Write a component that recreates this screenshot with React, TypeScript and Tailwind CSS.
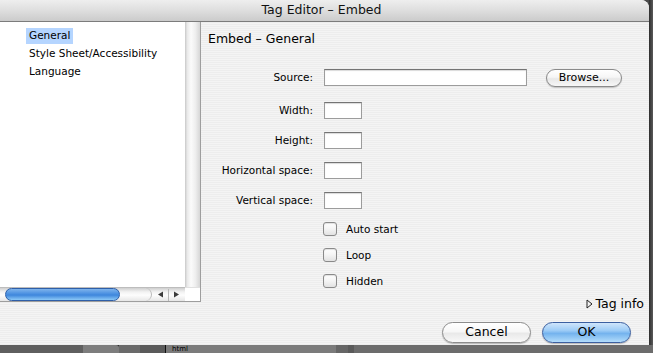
import React from "react";

const stripes =
  "bg-[repeating-linear-gradient(180deg,#ededed_0px,#ededed_1px,#f4f4f4_1px,#f4f4f4_2px)]";

function TextBox({ w }: { w: string }) {
  return (
    <div
      className={`${w} h-[17px] bg-white border border-[#9c9c9c] border-t-[#747474] shadow-[inset_0_1px_1px_rgba(0,0,0,0.15)]`}
    />
  );
}

function Row({ label, children }: { label: string; children: React.ReactNode }) {
  return (
    <div className="flex items-center h-[19px]">
      <div className="w-[112px] text-right text-[10.5px] leading-none text-black">{label}</div>
      <div className="ml-[11px] flex items-center">{children}</div>
    </div>
  );
}

function Check({ label }: { label: string }) {
  return (
    <div className="flex items-center h-[14px] ml-[122px]">
      <div className="w-[14px] h-[14px] rounded-[3px] border border-[#8a8a8a] bg-[linear-gradient(180deg,#ffffff_0%,#f4f4f4_50%,#e2e2e2_100%)] shadow-[inset_0_1px_1px_rgba(0,0,0,0.12)]" />
      <span className="ml-[9px] text-[10.5px] leading-none text-black">{label}</span>
    </div>
  );
}

export default function App() {
  return (
    <div className="w-[653px] h-[353px] overflow-hidden bg-[#4a4a4a] flex flex-col font-['DejaVu_Sans',sans-serif] text-black">
      <div className="flex h-[345px]">
        {/* window */}
        <div className={`w-[649px] h-full flex flex-col rounded-tr-[8px] overflow-hidden ${stripes}`}>
          {/* title bar */}
          <div className="h-[22px] shrink-0 flex items-center justify-center bg-[linear-gradient(180deg,#eeeeee_0%,#dedede_50%,#cbcbcb_100%)] border-b border-[#7c7c7c]">
            <span className="text-[12.5px] leading-none text-[#111] -ml-[6px]">Tag Editor – Embed</span>
          </div>
          <div className="flex flex-1 min-h-0">
            {/* left column */}
            <div className="w-[201px] shrink-0 flex flex-col">
              <div className="h-[280px] flex flex-col border-r border-b border-[#9e9e9e] bg-white">
                <div className="flex flex-1 min-h-0">
                  <div className="flex-1 bg-white pt-[5px] pl-[26px] text-[10.5px]">
                    <div className="h-[18px] flex items-center">
                      <span className="h-[16px] px-[3px] flex items-center bg-[#b5d5ff]">General</span>
                    </div>
                    <div className="h-[18px] flex items-center pl-[3px]">Style Sheet/Accessibility</div>
                    <div className="h-[18px] flex items-center pl-[3px]">Language</div>
                  </div>
                  <div className="w-[15px] bg-[linear-gradient(90deg,#c8c8c8_0%,#e9e9e9_15%,#fbfbfb_40%,#eeeeee_70%,#d6d6d6_100%)]" />
                </div>
                {/* horizontal scroller */}
                <div className="h-[14px] flex">
                  <div className="flex-1 flex items-center bg-[linear-gradient(180deg,#cfcfcf_0%,#f2f2f2_30%,#fdfdfd_55%,#e6e6e6_100%)] border-t border-[#bdbdbd]">
                    <div className="ml-[5px] w-[115px] h-[13px] rounded-full border border-[#2f5fa8] bg-[linear-gradient(180deg,#7fb4ec_0%,#4f93e2_40%,#3e86dc_55%,#8cc9f7_100%)]" />
                    <div className="w-[32px] h-[13px] rounded-r-full border-r border-[#b8b8b8]" />
                    <div className="flex items-center ml-[2px] h-full">
                      <svg width="14" height="13" viewBox="0 0 14 13">
                        <polygon points="4,6.5 9,3.5 9,9.5" fill="#3c3c3c" />
                      </svg>
                      <div className="w-px h-[12px] bg-[#b8b8b8]" />
                      <svg width="14" height="13" viewBox="0 0 14 13">
                        <polygon points="10,6.5 5,3.5 5,9.5" fill="#3c3c3c" />
                      </svg>
                    </div>
                  </div>
                  <div className="w-[15px] bg-white border-t border-[#e0e0e0]" />
                </div>
              </div>
            </div>
            {/* right column */}
            <div className="flex-1 flex flex-col">
              <div className="pt-[9px] pl-[7px] h-[25px] text-[12.5px] leading-[16px]">Embed – General</div>
              <div className="mt-[21px]">
                <Row label="Source:">
                  <TextBox w="w-[203px]" />
                  <button className="ml-[19px] w-[76px] h-[18px] rounded-full border border-[#8a8a8a] bg-[linear-gradient(180deg,#ffffff_0%,#f6f6f6_45%,#e8e8e8_55%,#f7f7f7_100%)] shadow-[0_1px_1px_rgba(0,0,0,0.2)] text-[11px] leading-none flex items-center justify-center">
                    Browse...
                  </button>
                </Row>
              </div>
              <div className="mt-[14px] flex flex-col gap-[11px]">
                <Row label="Width:"><TextBox w="w-[38px]" /></Row>
                <Row label="Height:"><TextBox w="w-[38px]" /></Row>
                <Row label="Horizontal space:"><TextBox w="w-[38px]" /></Row>
                <Row label="Vertical space:"><TextBox w="w-[38px]" /></Row>
              </div>
              <div className="mt-[12px] flex flex-col gap-[12px]">
                <Check label="Auto start" />
                <Check label="Loop" />
                <Check label="Hidden" />
              </div>
              <div className="mt-[8px] h-[16px] flex items-center justify-end pr-[5px]">
                <svg width="7" height="10" viewBox="0 0 7 10" className="mr-[2px]">
                  <polygon points="1,1 6,5 1,9" fill="none" stroke="#222" strokeWidth="1" />
                </svg>
                <span className="text-[12.5px] leading-none">Tag info</span>
              </div>
              <div className="mt-[10px] flex justify-end pr-[18px] gap-[11px]">
                <button className="w-[89px] h-[21px] rounded-full border border-[#8c8c8c] bg-[linear-gradient(180deg,#ffffff_0%,#f7f7f7_45%,#e9e9e9_55%,#f8f8f8_100%)] shadow-[0_1px_1px_rgba(0,0,0,0.25)] text-[12.5px] leading-none flex items-center justify-center">
                  Cancel
                </button>
                <button className="w-[89px] h-[21px] rounded-full border border-[#3b5fa0] bg-[linear-gradient(180deg,#cfe5fb_0%,#9ccbf6_40%,#74b3ee_55%,#b2dcfb_100%)] shadow-[0_1px_1px_rgba(0,0,0,0.25)] text-[12.5px] leading-none flex items-center justify-center">
                  OK
                </button>
              </div>
            </div>
          </div>
        </div>
        {/* right dark edge */}
        <div className="flex-1 bg-[linear-gradient(90deg,#2e2e2e_0%,#5a5a5a_100%)]" />
      </div>
      {/* background strip under window */}
      <div className="flex-1 flex bg-[#555555] shadow-[inset_0_2px_2px_rgba(0,0,0,0.5)]">
        <div className="w-[83px] bg-[#5f5f5f]" />
        <div className="w-[36px] bg-[#7d7d7d] rounded-tr-[3px]" />
        <div className="w-[21px] bg-[#6a6a6a]" />
        <div className="w-[25px] bg-[#5a5a5a]" />
        <div className="w-[1px] bg-[#111]" />
        <div className="w-[170px] bg-[#7b7b7b] text-[7px] leading-[8px] text-black pl-[6px]">html</div>
        <div className="w-[12px] bg-[#666]" />
        <div className="w-[6px] bg-[#5a5a5a]" />
        <div className="flex-1 bg-[#6c6c6c]" />
      </div>
    </div>
  );
}
